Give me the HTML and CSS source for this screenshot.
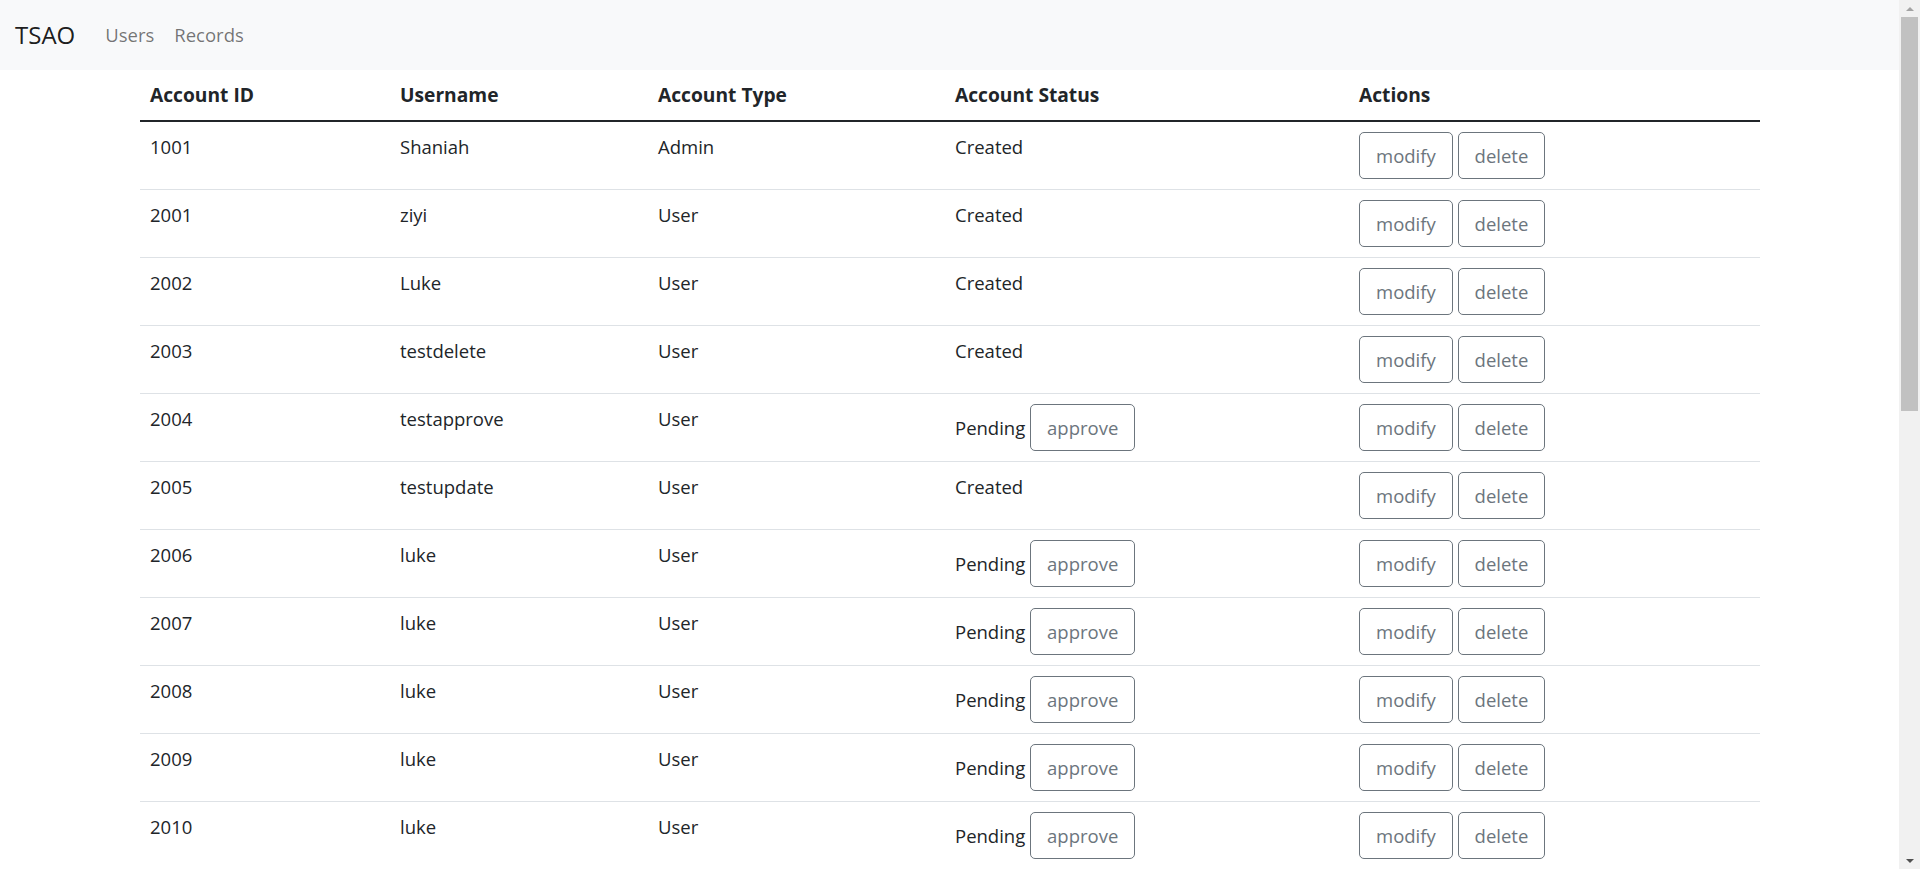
FILE: index.html
```html
<!DOCTYPE html>
<html lang="en">
<head>
<meta charset="utf-8">
<title>TSAO - Users</title>
<link rel="stylesheet" href="styles.css">
</head>
<body>
<div class="page">
  <nav class="navbar">
    <a class="brand" href="#">TSAO</a>
    <a class="nav-link" href="#">Users</a>
    <a class="nav-link" href="#">Records</a>
  </nav>
  <main class="content">
    <table class="table">
      <colgroup>
        <col class="c-id"><col class="c-user"><col class="c-type"><col class="c-status"><col class="c-actions">
      </colgroup>
      <thead>
        <tr><th>Account ID</th><th>Username</th><th>Account Type</th><th>Account Status</th><th>Actions</th></tr>
      </thead>
      <tbody>
        <tr><td>1001</td><td>Shaniah</td><td>Admin</td><td>Created</td><td><button class="btn">modify</button> <button class="btn">delete</button></td></tr>
        <tr><td>2001</td><td>ziyi</td><td>User</td><td>Created</td><td><button class="btn">modify</button> <button class="btn">delete</button></td></tr>
        <tr><td>2002</td><td>Luke</td><td>User</td><td>Created</td><td><button class="btn">modify</button> <button class="btn">delete</button></td></tr>
        <tr><td>2003</td><td>testdelete</td><td>User</td><td>Created</td><td><button class="btn">modify</button> <button class="btn">delete</button></td></tr>
        <tr><td>2004</td><td>testapprove</td><td>User</td><td>Pending <button class="btn">approve</button></td><td><button class="btn">modify</button> <button class="btn">delete</button></td></tr>
        <tr><td>2005</td><td>testupdate</td><td>User</td><td>Created</td><td><button class="btn">modify</button> <button class="btn">delete</button></td></tr>
        <tr><td>2006</td><td>luke</td><td>User</td><td>Pending <button class="btn">approve</button></td><td><button class="btn">modify</button> <button class="btn">delete</button></td></tr>
        <tr><td>2007</td><td>luke</td><td>User</td><td>Pending <button class="btn">approve</button></td><td><button class="btn">modify</button> <button class="btn">delete</button></td></tr>
        <tr><td>2008</td><td>luke</td><td>User</td><td>Pending <button class="btn">approve</button></td><td><button class="btn">modify</button> <button class="btn">delete</button></td></tr>
        <tr><td>2009</td><td>luke</td><td>User</td><td>Pending <button class="btn">approve</button></td><td><button class="btn">modify</button> <button class="btn">delete</button></td></tr>
        <tr><td>2010</td><td>luke</td><td>User</td><td>Pending <button class="btn">approve</button></td><td><button class="btn">modify</button> <button class="btn">delete</button></td></tr>
      </tbody>
    </table>
  </main>
</div>
<div class="scrollbar" aria-hidden="true">
  <div class="sb-arrow sb-up"></div>
  <div class="sb-track"><div class="sb-thumb"></div></div>
  <div class="sb-arrow sb-down"></div>
</div>
</body>
</html>
```

FILE: styles.css
```css
html {
  font-size: 20px;
}
body {
  margin: 0;
  height: 100vh;
  overflow: hidden;
  display: flex;
  font-family: "Open Sans", "Noto Sans", "Liberation Sans", sans-serif;
  font-size: 18.5px;
  line-height: 30px;
  color: #212529;
  background: #fff;
}
a {
  text-decoration: none;
}
.page {
  flex: 1;
  min-width: 0;
  overflow: hidden;
}
.navbar {
  display: flex;
  align-items: center;
  padding: 10px 15px;
  background: #f8f9fa;
}
.brand {
  font-size: 24px;
  line-height: 37.5px;
  padding: 6.25px 0;
  margin-right: 20px;
  color: rgba(0, 0, 0, 0.9);
}
.nav-link {
  font-size: 18.5px;
  line-height: 30px;
  padding: 10px;
  color: rgba(0, 0, 0, 0.55);
}
.content {
  display: block;
  padding: 0 140px;
}
.table {
  width: 100%;
  margin: 0;
  border-collapse: collapse;
  table-layout: fixed;
}
.c-id { width: 250px; }
.c-user { width: 258px; }
.c-type { width: 297px; }
.c-status { width: 404px; }
.c-actions { width: 411px; }
.table th {
  text-align: left;
  vertical-align: bottom;
  font-size: 19.2px;
  font-weight: 700;
  padding: 10px;
  border-bottom: 2px solid #212529;
}
.table td {
  vertical-align: top;
  padding: 10px;
  border-bottom: 1px solid #dee2e6;
}
.btn {
  display: inline-block;
  font-family: inherit;
  font-size: 18.5px;
  line-height: 30px;
  padding: 7.5px 16px;
  color: #6c757d;
  background: transparent;
  border: 1px solid #6c757d;
  border-radius: 5px;
  cursor: pointer;
  vertical-align: baseline;
}
.scrollbar {
  width: 21px;
  flex: none;
  display: flex;
  flex-direction: column;
  background: #f1f1f1;
}
.sb-arrow {
  height: 17px;
  flex: none;
  display: flex;
  align-items: center;
  justify-content: center;
}
.sb-arrow::before {
  content: "";
  width: 0;
  height: 0;
  border-left: 4px solid transparent;
  border-right: 4px solid transparent;
}
.sb-up::before {
  border-bottom: 4px solid #a3a3a3;
}
.sb-down::before {
  border-top: 4px solid #505050;
}
.sb-track {
  flex: 1;
}
.sb-thumb {
  height: 394px;
  margin: 0 2px;
  background: #c1c1c1;
}
```
